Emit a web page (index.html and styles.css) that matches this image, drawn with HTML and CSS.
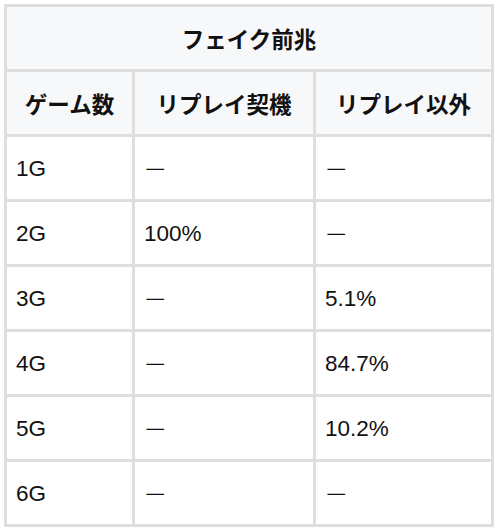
FILE: index.html
```html
<!DOCTYPE html>
<html lang="ja">
<head>
<meta charset="utf-8">
<link rel="stylesheet" href="styles.css">
</head>
<body>
<table class="fake-table">
  <colgroup>
    <col class="c1">
    <col class="c2">
    <col class="c3">
  </colgroup>
  <thead>
    <tr><th colspan="3">フェイク前兆</th></tr>
    <tr><th>ゲーム数</th><th>リプレイ契機</th><th>リプレイ以外</th></tr>
  </thead>
  <tbody>
    <tr><td>1G</td><td class="dash">ー</td><td class="dash">ー</td></tr>
    <tr><td>2G</td><td>100%</td><td class="dash">ー</td></tr>
    <tr><td>3G</td><td class="dash">ー</td><td>5.1%</td></tr>
    <tr><td>4G</td><td class="dash">ー</td><td>84.7%</td></tr>
    <tr><td>5G</td><td class="dash">ー</td><td>10.2%</td></tr>
    <tr><td>6G</td><td class="dash">ー</td><td class="dash">ー</td></tr>
  </tbody>
</table>
</body>
</html>
```
FILE: styles.css
```css
html, body {
  margin: 0;
  padding: 0;
  background: #ffffff;
}
body {
  padding: 4px;
  font-family: "Liberation Sans", "Noto Sans CJK JP", sans-serif;
  font-size: 22.5px;
  color: #111111;
}
.fake-table {
  width: 490px;
  table-layout: fixed;
  border-collapse: separate;
  border-spacing: 0;
  border-top: 3px solid #dedede;
  border-left: 3px solid #dedede;
}
.c1 { width: 128px; }
.c2 { width: 181px; }
.c3 { width: 178px; }
.fake-table tr {
  height: 65px;
}
.fake-table th,
.fake-table td {
  box-sizing: border-box;
  border-right: 3px solid #dedede;
  border-bottom: 3px solid #dedede;
  padding: 0 9px;
  vertical-align: middle;
  line-height: 1.2;
}
.fake-table th {
  background: #f7f8fa;
  font-weight: 700;
  text-align: center;
  font-family: "Noto Sans CJK JP", "Liberation Sans", sans-serif;
}
.fake-table td {
  background: #ffffff;
  text-align: left;
  font-weight: 400;
}
.fake-table td.dash {
  font-family: "Noto Sans CJK JP", sans-serif;
  font-weight: 300;
}
```
